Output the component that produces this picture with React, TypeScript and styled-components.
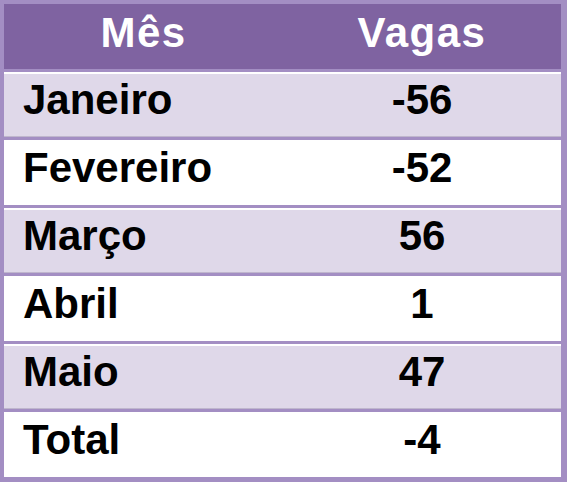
import React from "react";
import styled, { createGlobalStyle, css } from "styled-components";

const Global = createGlobalStyle`
  html, body { margin: 0; padding: 0; background: #ffffff; }
  body { font-family: "Liberation Sans", Arial, Helvetica, sans-serif; }
`;

const Frame = styled.div`
  width: 567px;
  height: 482px;
  box-sizing: border-box;
  background: #a38ec3;
  padding: 4px 6px 5px 4px;
  display: grid;
  grid-template-columns: 279px 278px;
  grid-template-rows: repeat(7, 65px);
  row-gap: 3px;
`;

type Tone = "head" | "tint" | "plain";

const Cell = styled.div<{ $tone: Tone; $center?: boolean }>`
  box-sizing: border-box;
  display: flex;
  align-items: center;
  justify-content: ${(p) => (p.$center ? "center" : "flex-start")};
  padding: 0 0 10px ${(p) => (p.$center ? "0" : "19px")};
  font-size: 42px;
  font-weight: 700;
  line-height: 1;
  ${(p) =>
    p.$tone === "head"
      ? css`
          background: #7f63a1;
          color: #ffffff;
          padding-bottom: 8px;
          letter-spacing: 1.5px;
        `
      : p.$tone === "tint"
      ? css`
          background: #dfd8e9;
          color: #000000;
          border-top: 2px solid #ffffff;
          border-bottom: 1px solid #bfb6cd;
        `
      : css`
          background: #ffffff;
          color: #000000;
        `}
`;

const rows: [string, string][] = [
  ["Janeiro", "-56"],
  ["Fevereiro", "-52"],
  ["Março", "56"],
  ["Abril", "1"],
  ["Maio", "47"],
  ["Total", "-4"],
];

export default function App() {
  return (
    <>
      <Global />
      <Frame>
        <Cell $tone="head" $center>Mês</Cell>
        <Cell $tone="head" $center>Vagas</Cell>
        {rows.map(([m, v], i) => {
          const tone: Tone = i % 2 === 0 ? "tint" : "plain";
          return (
            <React.Fragment key={m}>
              <Cell $tone={tone}>{m}</Cell>
              <Cell $tone={tone} $center>{v}</Cell>
            </React.Fragment>
          );
        })}
      </Frame>
    </>
  );
}
